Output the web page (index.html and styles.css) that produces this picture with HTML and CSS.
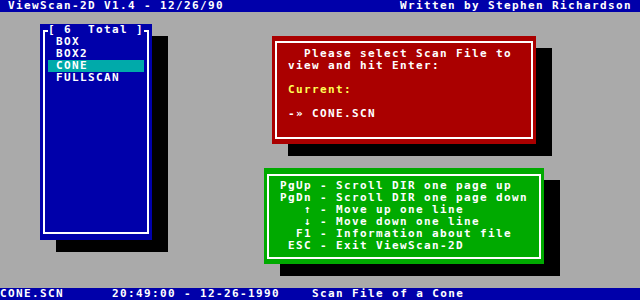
FILE: index.html
```html
<!DOCTYPE html>
<html lang="en">
<head>
    <meta charset="UTF-8">
    <meta name="viewport" content="width=device-width, initial-scale=1.0">
    <title>ViewScan-2D</title>
    <link rel="stylesheet" href="styles.css">
</head>
<body>
    <div class="screen">
        <header class="bar top-bar">
            <span>ViewScan-2D V1.4 - 12/26/90</span>
            <span>Written by Stephen Richardson</span>
        </header>

        <div class="win dir-win">
            <div class="frame">
                <div class="frame-title">[ 6  Total ]</div>
                <ul class="files">
                    <li>BOX</li>
                    <li>BOX2</li>
                    <li class="selected">CONE</li>
                    <li>FULLSCAN</li>
                </ul>
            </div>
        </div>

        <div class="win prompt-win">
            <div class="frame">
<pre class="lines">  Please select Scan File to
view and hit Enter:

<span class="yellow">Current:</span>

-» CONE.SCN</pre>
            </div>
        </div>

        <div class="win keys-win">
            <div class="frame">
<pre class="lines">PgUp - Scroll DIR one page up
PgDn - Scroll DIR one page down
   ↑ - Move up one line
   ↓ - Move down one line
  F1 - Information about file
 ESC - Exit ViewScan-2D</pre>
            </div>
        </div>

        <footer class="bar status-bar">CONE.SCN      20:49:00 - 12-26-1990    Scan File of a Cone</footer>
    </div>
</body>
</html>
```

FILE: styles.css
```css
body {
    margin: 0;
    background: #aaaaaa;
    font-family: "DejaVu Sans Mono", "Liberation Mono", monospace;
    font-weight: bold;
    font-size: 11px;
    letter-spacing: 1.38px;
    line-height: 12px;
    color: #ffffff;
}
.screen {
    display: grid;
    grid-template-columns: repeat(80, 8px);
    grid-template-rows: repeat(25, 12px);
    width: 640px;
    height: 300px;
    overflow: hidden;
}
.bar {
    grid-column: 1 / -1;
    background: #0000aa;
    white-space: pre;
}
.top-bar {
    grid-row: 1;
    display: flex;
    justify-content: space-between;
    padding: 0 8px;
}
.status-bar {
    grid-row: 25;
}
.win {
    display: flex;
    box-shadow: 16px 12px 0 #000000;
}
.frame {
    flex: 1;
    display: flex;
    flex-direction: column;
    border: 2px solid #ffffff;
    margin: 5px 3px;
}
.dir-win {
    grid-column: 6 / span 14;
    grid-row: 3 / span 18;
    background: #0000aa;
}
.dir-win .frame {
    margin: 6px 3px;
}
.frame-title {
    margin: -8px 3px 0;
    background: #0000aa;
    white-space: pre;
}
.files {
    list-style: none;
    margin: 0;
    padding: 0;
}
.files li {
    margin: 0 3px;
    padding-left: 8px;
}
.files .selected {
    background: #00aaaa;
}
.prompt-win {
    grid-column: 35 / span 33;
    grid-row: 4 / span 9;
    background: #aa0000;
}
.prompt-win .lines {
    padding: 5px 0 0 11px;
}
.keys-win {
    grid-column: 34 / span 35;
    grid-row: 15 / span 8;
    background: #00aa00;
}
.keys-win .frame {
    margin: 6px 3px 5px;
}
.keys-win .lines {
    padding: 4px 0 0 11px;
}
.lines {
    margin: 0;
    font: inherit;
}
.yellow {
    color: #ffff55;
}
```
